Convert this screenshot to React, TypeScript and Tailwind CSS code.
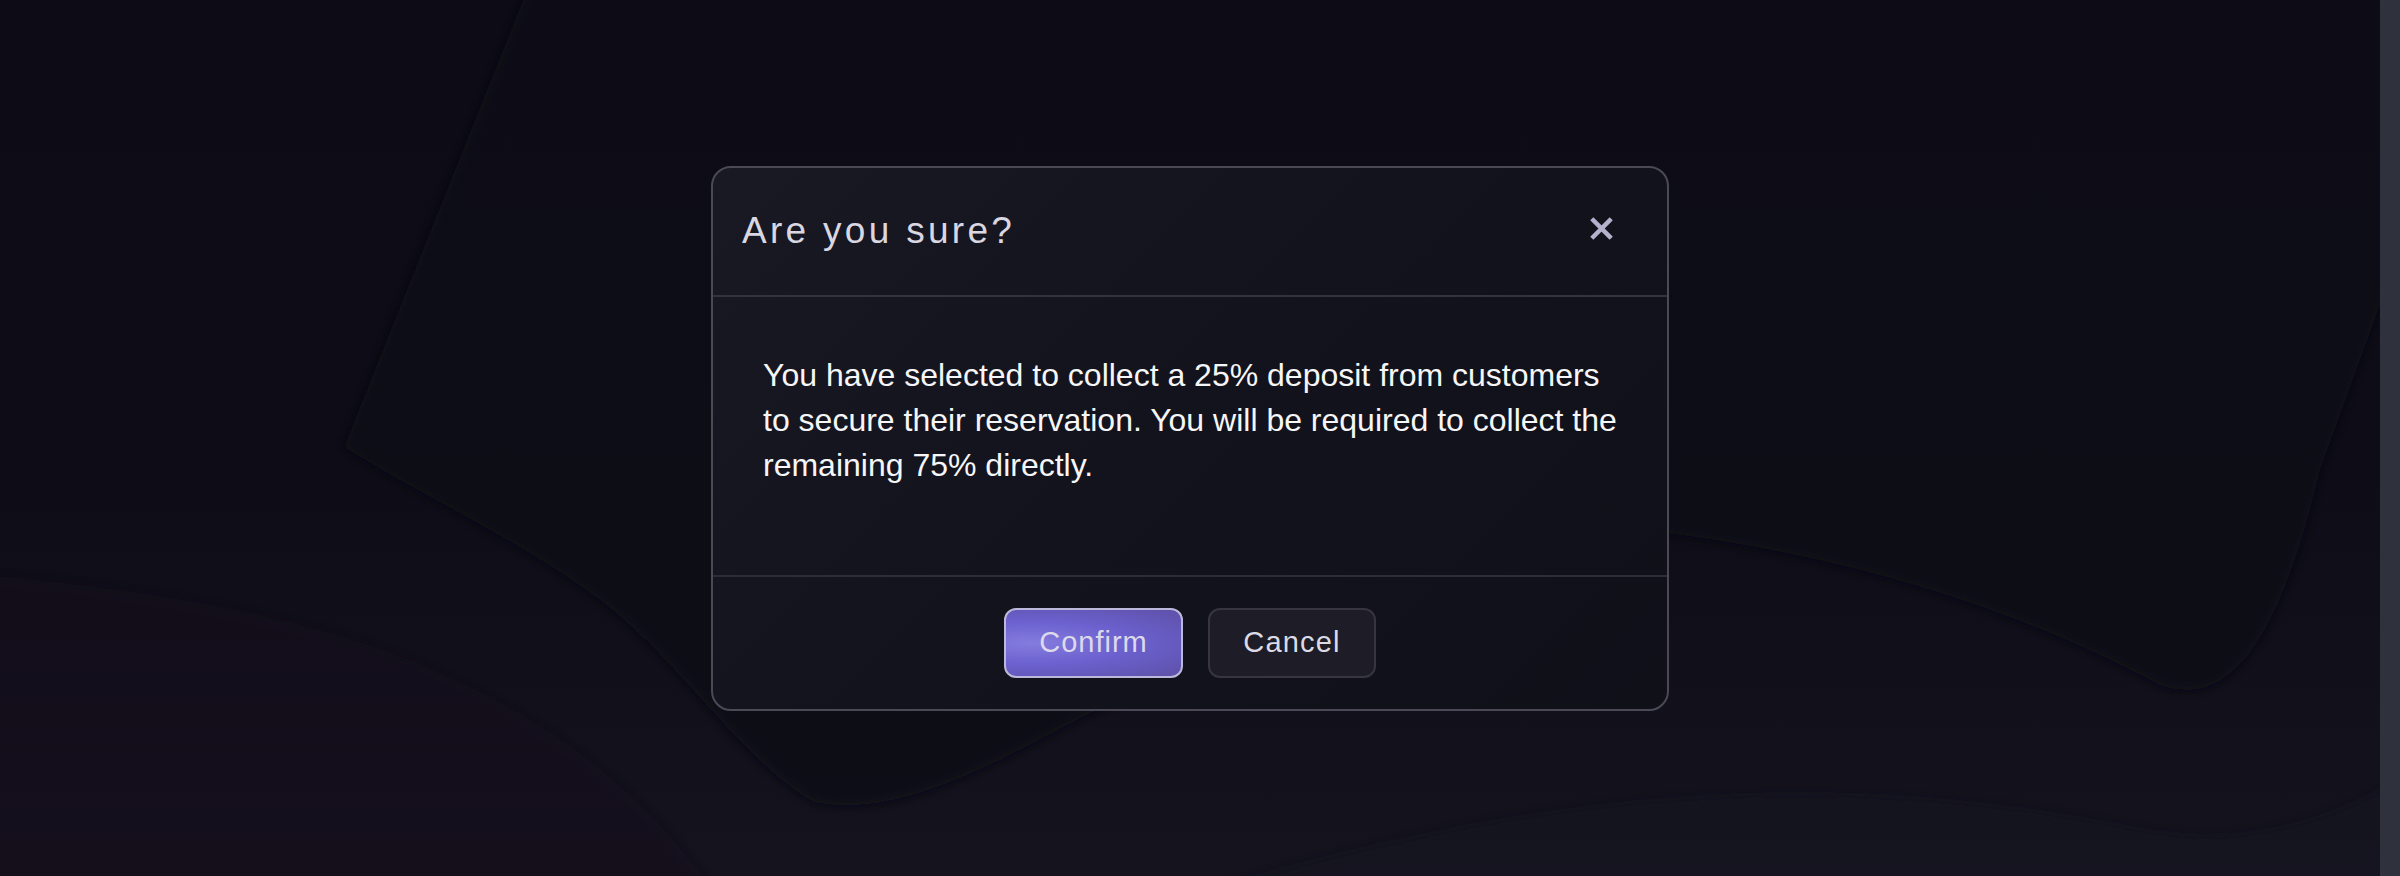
import { useState } from "react";

// Deposit confirmation dialog, centred over a dark wavy backdrop.
// The strip on the right stands in for the browser's empty scrollbar track.

const sans = "font-['Liberation_Sans',Arial,sans-serif]";

function Backdrop() {
  // Soft dark "bowl" behind the dialog; purely decorative.
  return (
    <svg
      aria-hidden="true"
      viewBox="0 0 2380 876"
      preserveAspectRatio="none"
      className="pointer-events-none absolute inset-0 h-full w-full"
    >
      <defs>
        <filter id="soft" x="-10%" y="-10%" width="120%" height="120%">
          <feGaussianBlur stdDeviation="4" />
        </filter>
      </defs>
      <path
        d="M-20,575 C150,590 300,615 420,665 C560,725 640,790 720,900 L-20,900 Z"
        fill="#12111c"
        opacity="0.5"
        filter="url(#soft)"
      />
      <path
        d="M1180,900 C1500,800 1800,760 2140,830 C2250,850 2330,820 2400,780 L2400,900 Z"
        fill="#151420"
        opacity="0.5"
        filter="url(#soft)"
      />
      <path
        d="M535,-30 L344,447 C420,495 520,540 600,600 C680,660 740,760 814,802 C900,820 1000,760 1090,713 L1650,531 C1850,555 2020,610 2160,685 C2230,710 2280,640 2320,470 L2400,250 L2400,-30 Z"
        fill="#0b0a13"
        opacity="0.85"
        filter="url(#soft)"
      />
    </svg>
  );
}

export default function App() {
  const [open, setOpen] = useState(true);

  return (
    <div className={`flex h-[876px] w-full overflow-hidden bg-[#0c0b14] ${sans}`}>
      <div className="relative flex flex-1 items-center justify-center overflow-hidden bg-[linear-gradient(180deg,#0d0c16_0%,#0e0d17_55%,#14131e_100%)]">
        <Backdrop />

        {open && (
          <div
            role="dialog"
            aria-labelledby="confirm-title"
            className="relative z-10 flex w-[958px] flex-col rounded-[20px] border-2 border-[#4a4955] bg-[linear-gradient(135deg,#191923_0%,#13131d_45%,#101019_100%)]"
          >
            <div className="flex h-[129px] items-center justify-between border-b-2 border-[#33323d] pl-[29px] pr-[54px]">
              <h2
                id="confirm-title"
                className="text-[37px] font-normal tracking-[3.3px] text-[#d9d7e2]"
              >
                Are you sure?
              </h2>
              <button
                type="button"
                aria-label="Close"
                onClick={() => setOpen(false)}
                className="-mt-[5px] flex size-[24px] items-center justify-center text-[#b3b1cc]"
              >
                <svg viewBox="0 0 24 24" className="size-[23px]" fill="none">
                  <path
                    d="M3.5 3.5 L20.5 20.5 M20.5 3.5 L3.5 20.5"
                    stroke="currentColor"
                    strokeWidth="4.6"
                    strokeLinecap="square"
                  />
                </svg>
              </button>
            </div>

            <div className="border-b-2 border-[#2d2c37] pb-[87px] pl-[50px] pr-[46px] pt-[56px]">
              <p className="text-[32px] leading-[45px] text-[#f6f6f8]">
                You have selected to collect a 25% deposit from customers to
                secure their reservation. You will be required to collect the
                remaining 75% directly.
              </p>
            </div>

            <div className="flex items-center justify-center gap-[25px] pb-[31px] pt-[31px]">
              <button
                type="button"
                onClick={() => setOpen(false)}
                className="h-[70px] w-[179px] rounded-[12px] border-2 border-[#bcb8dc] bg-[radial-gradient(ellipse_at_15%_50%,#857cde_0%,#6c61cf_45%,#5d51a8_100%)] text-[29px] tracking-[1px] text-[#dcdaea]"
              >
                Confirm
              </button>
              <button
                type="button"
                onClick={() => setOpen(false)}
                className="h-[70px] w-[168px] rounded-[12px] border-2 border-[#363541] bg-[#1d1c27] text-[29px] tracking-[1.2px] text-[#dcdae4]"
              >
                Cancel
              </button>
            </div>
          </div>
        )}
      </div>
      <div className="h-full w-[20px] shrink-0 bg-[#2f313c]" />
    </div>
  );
}
